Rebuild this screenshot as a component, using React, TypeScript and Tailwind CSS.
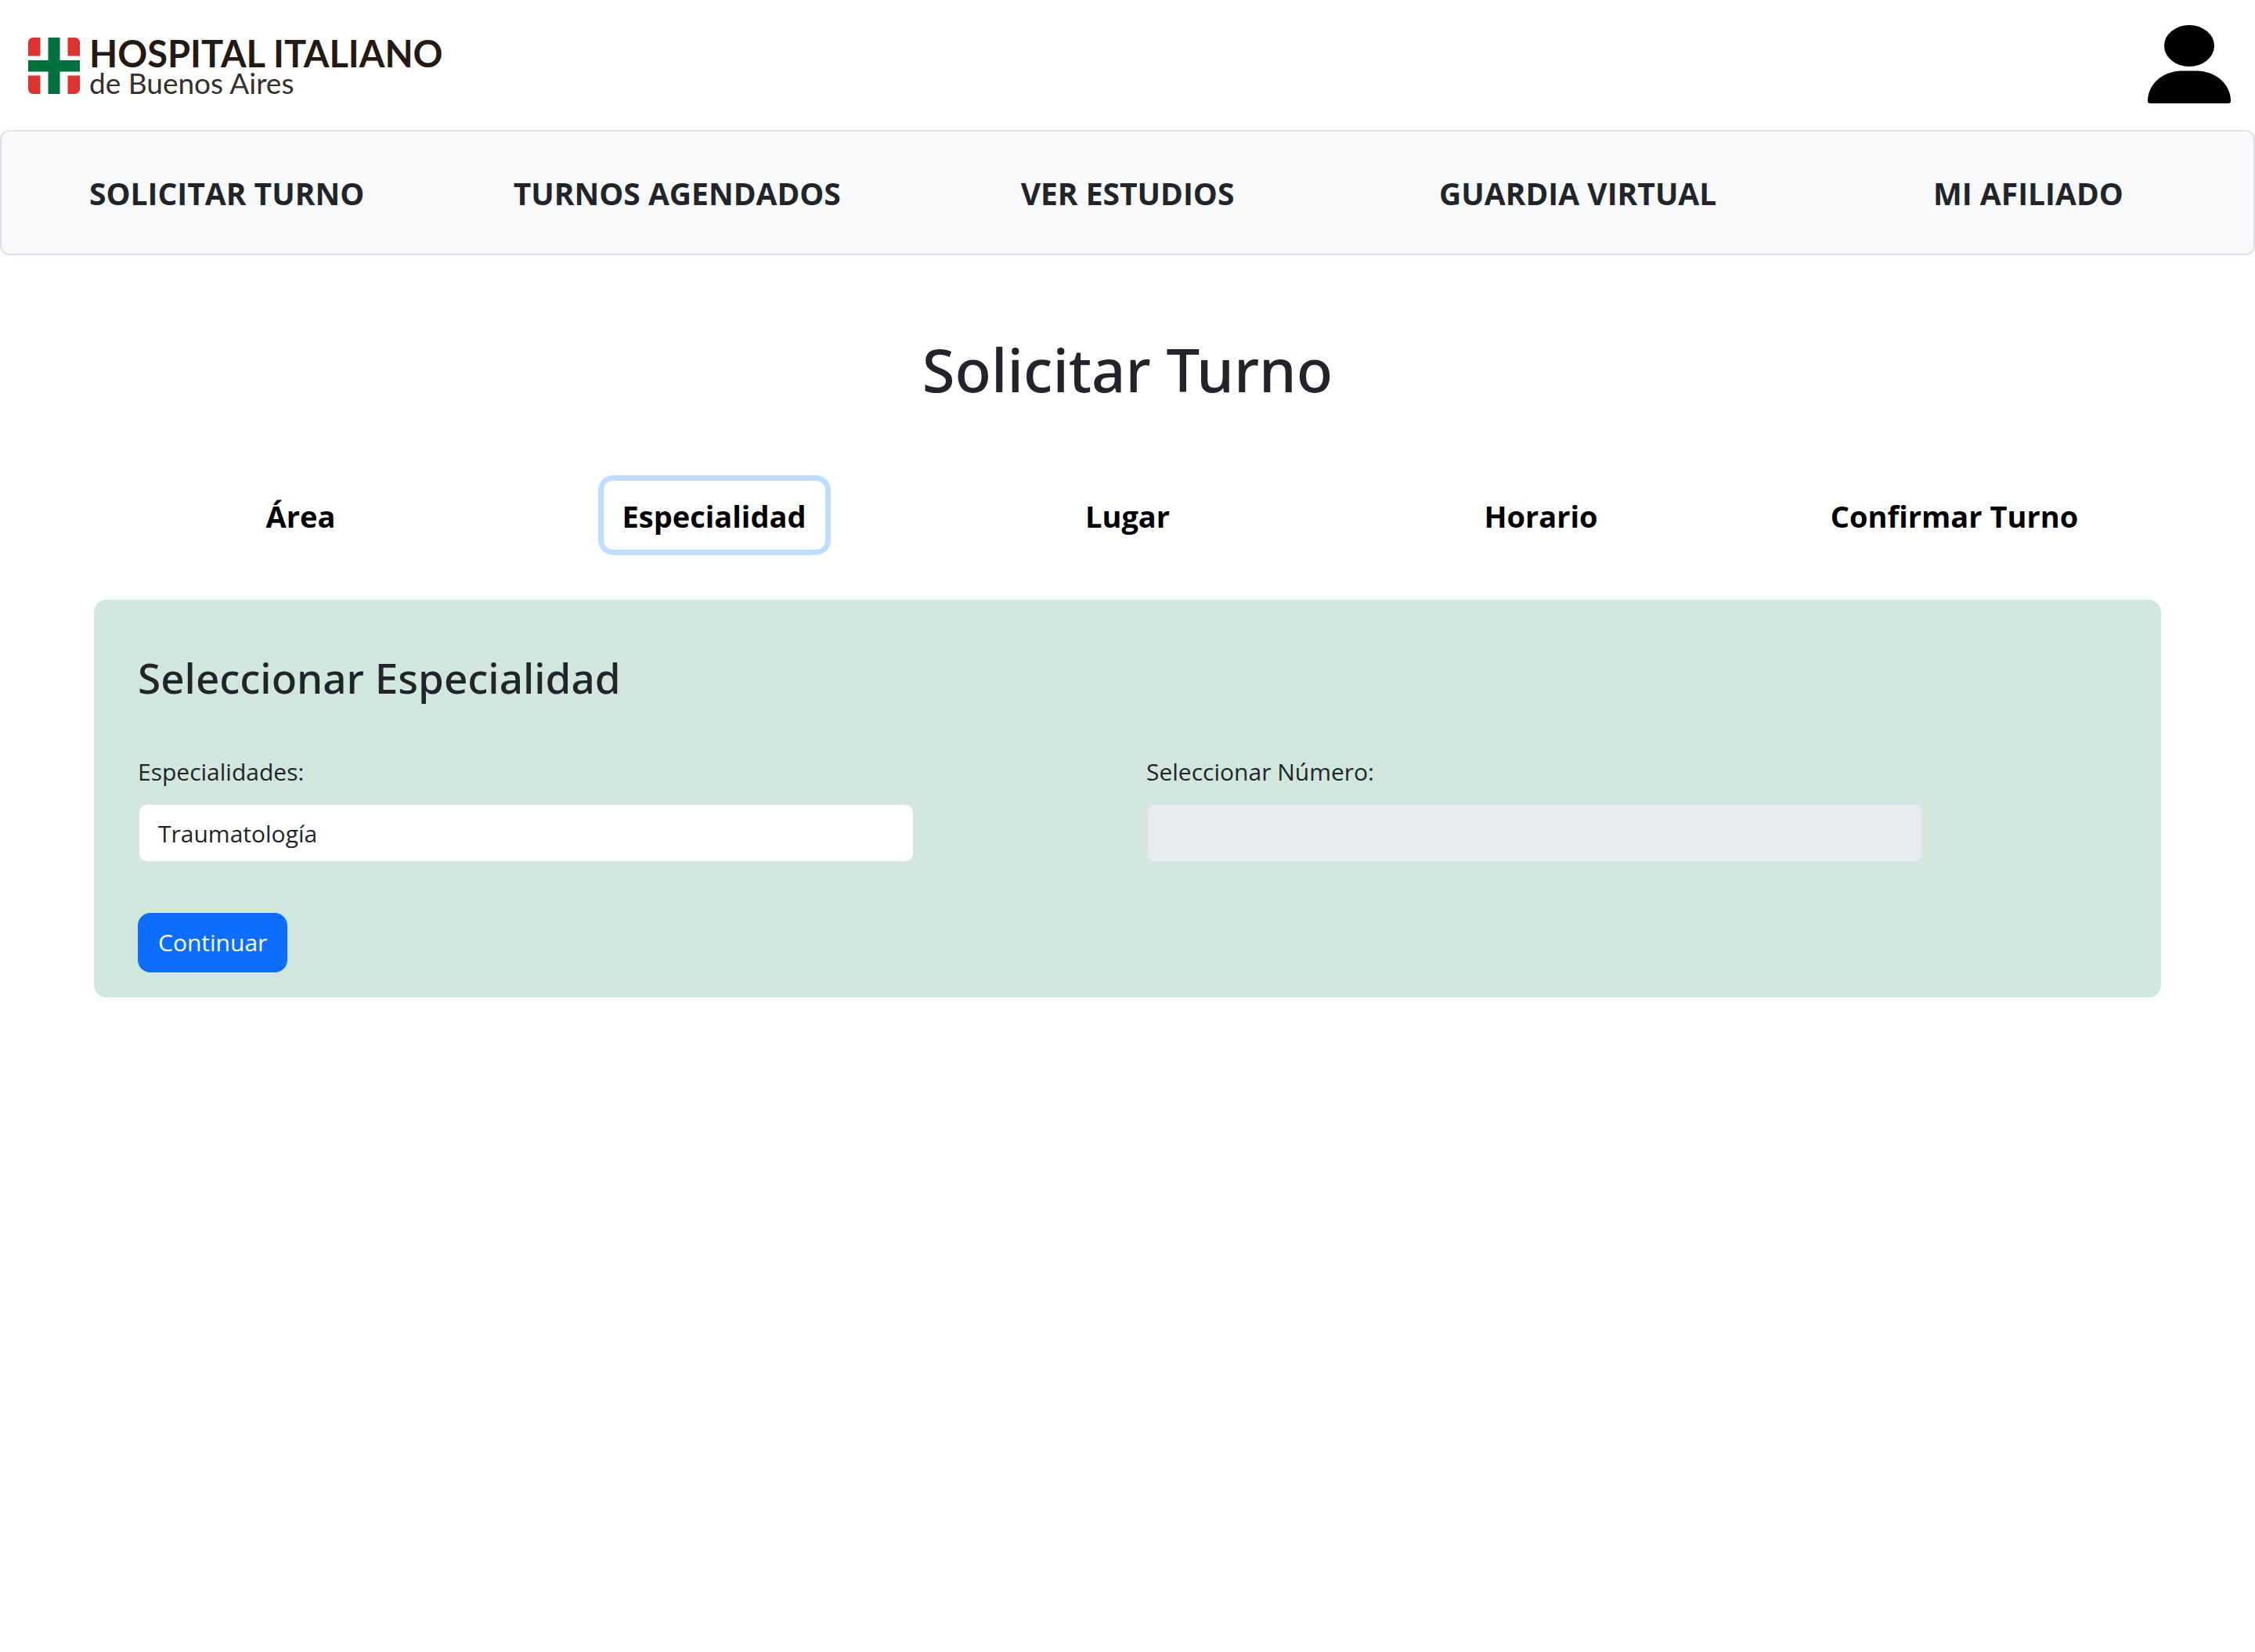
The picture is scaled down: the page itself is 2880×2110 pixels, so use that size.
import { useState } from 'react';

const navItems = ['SOLICITAR TURNO', 'TURNOS AGENDADOS', 'VER ESTUDIOS', 'GUARDIA VIRTUAL', 'MI AFILIADO'];
const steps = ['Área', 'Especialidad', 'Lugar', 'Horario', 'Confirmar Turno'];

function LogoMark() {
  return (
    <svg viewBox="0 0 66 72" className="h-[72px] w-[66px]" aria-hidden="true">
      <path fill="#de3431" d="M6 0h9.500v23.500H0V6a6 6 0 0 1 6-6zM50.500 0H60a6 6 0 0 1 6 6v17.500H50.500zM0 48.500h15.500V72H6a6 6 0 0 1-6-6zM50.500 48.500H66V66a6 6 0 0 1-6 6h-9.500z" />
      <path fill="#00703c" d="M25.500 0h15v29H66v14.500H40.500V72h-15V43.500H0V29h25.500z" />
    </svg>
  );
}

function UserIcon() {
  return (
    <svg viewBox="0 0 106 100" className="h-[100px] w-[106px]" aria-hidden="true">
      <ellipse cx="53" cy="26.500" rx="32" ry="26.500" />
      <path d="M0 97C0 75 20 58.500 43 58.500h20C86 58.500 106 75 106 97q0 3-3 3H3q-3 0-3-3z" />
    </svg>
  );
}

export default function App() {
  const [step, setStep] = useState('Especialidad');
  const [specialty, setSpecialty] = useState('Traumatología');

  return (
    <div className="min-h-screen bg-white font-['Open_Sans',sans-serif] text-[30px] leading-[48px] text-[#212529]">
      <header className="flex h-[166px] items-start justify-between pt-8 pr-[31px] pl-9">
        <a href="#" className="flex items-start gap-3 pt-4 font-['Lato',sans-serif]">
          <LogoMark />
          <span className="flex flex-col">
            <span className="text-[47px] leading-[40px] font-bold text-[#231a16]">HOSPITAL ITALIANO</span>
            <span className="text-[37px] leading-[36px] text-[#35302e]">de Buenos Aires</span>
          </span>
        </a>
        <button type="button" aria-label="Mi cuenta" className="text-black">
          <UserIcon />
        </button>
      </header>

      <nav className="flex rounded-xl border-2 border-[#dee2e6] bg-[#f8f9fa] pt-[49px] pb-[47px]">
        {navItems.map((item) => (
          <a key={item} href="#" className="flex-1 text-center text-[39px] leading-[60px] font-bold">
            {item}
          </a>
        ))}
      </nav>

      <main className="px-[120px]">
        <h1 className="mt-[98px] text-center font-['Noto_Sans',sans-serif] text-[76px] leading-[96px] font-medium">
          Solicitar Turno
        </h1>

        <div className="mt-[94px] grid grid-cols-5 justify-items-center">
          {steps.map((s) => (
            <button
              key={s}
              type="button"
              onClick={() => setStep(s)}
              className={
                s === step
                  ? 'rounded-xl px-6 pt-[15px] pb-[13px] text-[38px] leading-[60px] font-bold text-black ring-[7px] ring-[#bfdeff]'
                  : 'rounded-xl px-6 pt-[15px] pb-[13px] text-[38px] leading-[60px] font-bold text-black'
              }
            >
              {s}
            </button>
          ))}
        </div>

        <section className="mt-16 rounded-2xl bg-[#d1e7dd] px-8 pt-16 pb-8">
          <h2 className="px-6 font-['Noto_Sans',sans-serif] text-[53px] leading-[72px] font-medium">
            Seleccionar Especialidad
          </h2>
          <form onSubmit={(e) => e.preventDefault()}>
            <div className="mt-[60px] grid grid-cols-2">
              <div className="px-6">
                <label htmlFor="especialidades" className="block">
                  Especialidades:
                </label>
                <input
                  id="especialidades"
                  value={specialty}
                  onChange={(e) => setSpecialty(e.target.value)}
                  className="mt-4 block h-[76px] w-4/5 rounded-xl border-2 border-[#dee2e6] bg-white px-6"
                />
              </div>
              <div className="px-6">
                <label htmlFor="numero" className="block">
                  Seleccionar Número:
                </label>
                <input
                  id="numero"
                  disabled
                  className="mt-4 block h-[76px] w-4/5 rounded-xl border-2 border-[#dee2e6] bg-[#e9ecef] px-6"
                />
              </div>
            </div>
            <button type="submit" className="mt-16 ml-6 rounded-2xl bg-[#0d6efd] px-[26px] py-3.5 text-white">
              Continuar
            </button>
          </form>
        </section>
      </main>
    </div>
  );
}
